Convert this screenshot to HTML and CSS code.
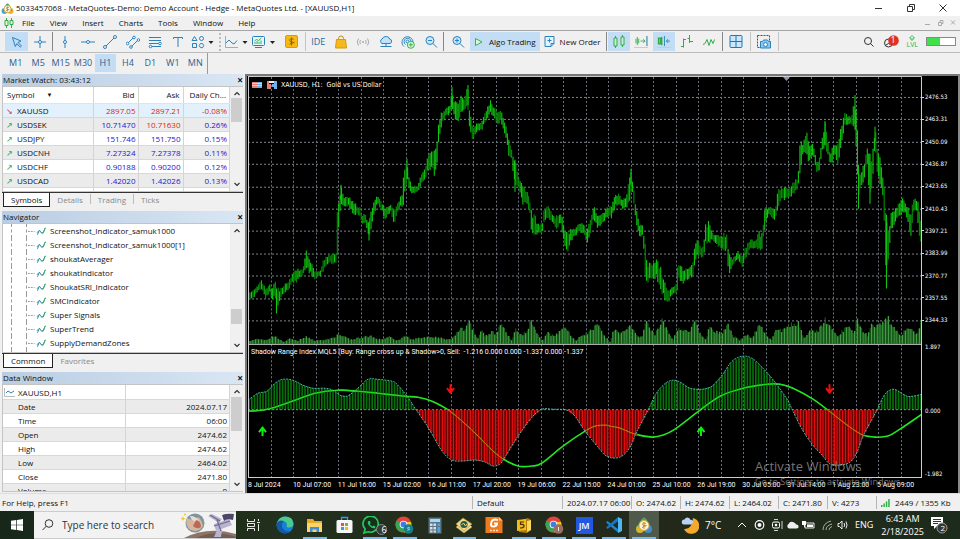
FILE: index.html
```html
<!DOCTYPE html>
<html lang="en">
<head>
<meta charset="utf-8">
<title>5033457068 - MetaQuotes-Demo</title>
<link rel="stylesheet" href="styles.css">
</head>
<body>
<header class="titlebar">
  <svg class="app-logo" width="13" height="13" viewBox="0 0 13 13"><circle cx="3.5" cy="9" r="3" fill="#4aa5dc"/><circle cx="9.5" cy="9" r="3" fill="#e9b52a"/><path d="M4 4Q6.500-1 9 4L11 9H2z" fill="#3f9f52"/><circle cx="6.500" cy="7" r="3.600" fill="#fff" stroke="#d8a93a"/><path d="M8 5.500Q5 4.500 5.300 6.300T7.700 7.500T5 8.600M6.500 4.500v5" fill="none" stroke="#b8862a" stroke-width=".8"/></svg>
  <h1>5033457068 - MetaQuotes-Demo: Demo Account - Hedge - MetaQuotes Ltd. - [XAUUSD,H1]</h1>
  <div class="window-buttons">
    <button aria-label="Minimize"><svg width="10" height="10" viewBox="0 0 10 10"><path d="M1 5.500h7" class="ink"/></svg></button>
    <button aria-label="Restore"><svg width="10" height="10" viewBox="0 0 10 10"><path d="M1.500 3.500h5v5h-5zM3.500 3.500v-2h5v5h-2" class="ink"/></svg></button>
    <button aria-label="Close"><svg width="10" height="10" viewBox="0 0 10 10"><path d="M1.500 1.500l7 7M8.500 1.500l-7 7" class="ink"/></svg></button>
  </div>
</header>

<nav class="menubar">
  <svg width="10" height="10" viewBox="0 0 10 10"><path d="M2.500 0v10M7.500 0v10" stroke="#2fae45"/><path d="M1 2.500h3v5H1zM6 2.500h3v4H6z" fill="#efefef" stroke="#2fae45"/></svg>
  <button>File</button><button>View</button><button>Insert</button><button>Charts</button><button>Tools</button><button>Window</button><button>Help</button>
  <div class="child-buttons"><svg width="36" height="8" viewBox="0 0 36 8"><path d="M1 5.500h5" stroke="#aaa"/><path d="M14.500 3.500h3v3h-3zM16 3V1.500h3v3h-1.500M27 1.500l4 4M31 1.500l-4 4" fill="none" stroke="#aaa"/></svg></div>
</nav>

<section class="toolbar">
  <div class="group g2">
    <button class="on" aria-label="Cursor"><svg width="12" height="12" viewBox="0 0 12 12"><path d="M1.500 1.500l8.500 3.500-3 1.500 3.500 3.500-1.200 1.200-3.500-3.500-1.500 2.800z" class="b"/></svg></button>
    <button aria-label="Crosshair"><svg width="12" height="12" viewBox="0 0 12 12"><path d="M6 0v12M0 6h12" class="b"/><circle cx="6" cy="6" r="1.500" class="w"/></svg></button>
  </div>
  <i class="sep"></i>
  <div class="group g6">
    <button aria-label="Vertical line"><svg width="12" height="12" viewBox="0 0 12 12"><path d="M6 0v12" class="b"/><circle cx="6" cy="6" r="1.500" class="w"/></svg></button>
    <button aria-label="Horizontal line"><svg width="14" height="12" viewBox="0 0 14 12"><path d="M0 6h14" class="b"/><circle cx="7" cy="6" r="1.500" class="w"/></svg></button>
    <button aria-label="Trendline"><svg width="14" height="14" viewBox="0 0 14 14"><path d="M2 12L12 2" class="b"/><circle cx="2" cy="12" r="1.500" class="w"/><circle cx="12" cy="2" r="1.500" class="w"/></svg></button>
    <button aria-label="Channel"><svg width="14" height="14" viewBox="0 0 14 14"><path d="M1.500 8.500l6-6M5 12l7-7" class="b"/><circle cx="1.500" cy="8.500" r="1.300" class="w"/><circle cx="8" cy="2.500" r="1.300" class="w"/><circle cx="5" cy="12" r="1.300" class="w"/><circle cx="12.500" cy="5" r="1.300" class="w"/></svg></button>
    <button aria-label="Fibonacci"><svg width="14" height="14" viewBox="0 0 14 14"><path d="M1 2.500h12M1 5.500h12M1 8.500h12M1 11.500h12" class="b"/><circle cx="12" cy="8.500" r="1.300" class="w"/><circle cx="2.500" cy="11.500" r="1.300" class="w"/></svg></button>
    <button aria-label="Text"><svg width="12" height="12" viewBox="0 0 12 12"><path d="M1.500 3V1.500h9V3M6 1.500V11" class="b"/></svg></button>
  </div>
  <button class="drop" aria-label="Objects"><svg width="24" height="14" viewBox="0 0 24 14"><path d="M3.500 1.500L6 5.500H1zM1.500 8.500h4v4h-4z" class="b"/><circle cx="10.500" cy="3.500" r="2" class="b"/><path d="M12.800 10.600l-1.200 2H9.400l-1.200-2 1.200-2h2.200z" class="b"/><path d="M17.500 6h5L20 9z" fill="#222"/></svg></button>
  <i class="grip"></i>
  <button class="drop" aria-label="Line chart"><svg width="26" height="14" viewBox="0 0 26 14"><path d="M1.500 1v11.500H14" fill="none" stroke="#aaa"/><path d="M2 8l3-3 3 3 2 1 3-3.500" class="b"/><path d="M18.500 6h5L21 9z" fill="#222"/></svg></button>
  <button class="drop" aria-label="Indicators"><svg width="28" height="14" viewBox="0 0 28 14"><rect x="1.500" y="1.500" width="12" height="9" rx="1" fill="#e7f6fb" stroke="#2a82bd"/><path d="M4 9V7M6 9V6M8 9V7M10 9V5.500" stroke="#35b24c"/><path d="M3.500 6l2-1.500 2 1 3-2.500" fill="none" stroke="#35b24c"/><path d="M4 12.500h7" stroke="#2a82bd"/><path d="M19 6h5l-2.500 3z" fill="#222"/></svg></button>
  <button class="icon" aria-label="Trade"><svg width="13" height="13" viewBox="0 0 13 13"><rect x=".5" y=".5" width="12" height="12" rx="1.500" fill="#f7b910" stroke="#d99c06"/><path d="M8.500 4.300Q4.500 3 4.700 5.200T8.200 7.300T4.500 9M6.500 2.500v8" fill="none" stroke="#8f6605"/></svg></button>
  <i class="sep light"></i>
  <div class="group g6">
    <button class="txt">IDE</button>
    <button aria-label="Market"><svg width="12" height="14" viewBox="0 0 12 14"><path d="M3.500 5V3.500a2.500 2.500 0 015 0V5" fill="none" stroke="#c58d10"/><path d="M1.500 4.500h9l1 8.500H.5z" fill="#f6b81b" stroke="#d89a0c"/></svg></button>
    <button aria-label="Signals"><svg width="14" height="10" viewBox="0 0 14 10"><path d="M2.500 1.500Q0 5 2.500 8.500M4.500 3Q3 5 4.500 7M11.500 1.500Q14 5 11.500 8.500M9.500 3Q11 5 9.500 7" fill="none" stroke="#aaa"/><circle cx="7" cy="5" r="1" fill="#aaa"/></svg></button>
    <button aria-label="Cloud"><svg width="14" height="13" viewBox="0 0 14 13"><path d="M3 8.500A2.500 2.500 0 013 4Q4.500 1 7.500 1.500T10.500 4A2.300 2.300 0 0111 8.500z" fill="#bfe3fa" stroke="#2a82bd"/><path d="M7 8.500V11M1.500 11.500h11" class="b"/></svg></button>
    <button aria-label="VPS"><svg width="14" height="14" viewBox="0 0 14 14"><path d="M3 11.500A5.500 5.500 0 1112 7M4.500 9.500A3.500 3.500 0 1110 6" class="b"/><circle cx="6.500" cy="6.500" r="1.500" class="b"/><circle cx="9.800" cy="9.800" r="3.500" fill="#dff7df" stroke="#35b24c"/><path d="M9.800 7.800v4M7.800 9.800h4" stroke="#35b24c"/></svg></button>
    <button aria-label="Zoom out"><svg width="14" height="14" viewBox="0 0 14 14"><circle cx="6" cy="5.500" r="4" fill="#c9e6fa" stroke="#2a82bd"/><path d="M4 5.500h4M9 8.500l4 4" class="b"/></svg></button>
  </div>
  <i class="sep"></i>
  <button class="icon" aria-label="Zoom in"><svg width="14" height="14" viewBox="0 0 14 14"><circle cx="6" cy="5.500" r="4" fill="#c9e6fa" stroke="#2a82bd"/><path d="M4 5.500h4M6 3.500v4M9 8.500l4 4" class="b"/></svg></button>
  <button class="wide on"><svg width="10" height="10" viewBox="0 0 10 10"><path d="M1.500 1.500L8 5 1.500 8.500z" fill="#dff5e3" stroke="#35b24c"/></svg>Algo Trading</button>
  <button class="wide"><svg width="11" height="13" viewBox="0 0 11 13"><path d="M1 1.500h9v7l-3 3H1z" fill="#e3f2fc" stroke="#2a82bd"/><path d="M5.500 3.500v4M3.500 5.500h4M7 11.500v-3h3" class="b"/></svg>New Order</button>
  <i class="sep"></i>
  <div class="group g5">
    <button class="on" aria-label="Candles"><svg width="14" height="14" viewBox="0 0 14 14"><path d="M3.500 1v12M10.500 0v12" class="g"/><path d="M2 3h3v8H2zM9 2h3v8H9z" fill="#cdeee0" stroke="#2fae45"/></svg></button>
    <button class="under" aria-label="Scroll"><svg width="14" height="12" viewBox="0 0 14 12"><path d="M1.500 3v5M4.500 3v5M3 1v9M6.500 5.500h5M9.500 3.500l2 2-2 2" class="g"/><path d="M13.500 0v11" stroke="#1769a5"/></svg></button>
    <button class="on under" aria-label="Shift"><svg width="14" height="12" viewBox="0 0 14 12"><path d="M1 2.500h2v6H1zM4.500 1v9" class="g" stroke-width="1.500"/><path d="M7.500 0v11M13.500 5.500H9.500M11.500 3.500l-2 2 2 2" class="b"/></svg></button>
    <button aria-label="Bars"><svg width="14" height="13" viewBox="0 0 14 13"><path d="M3.500 3.500v9M1 11.500h2.500M3.500 4.500H6M9.500 0v8M7.500 3.500h2M9.500 6.500H13" class="g"/></svg></button>
    <button aria-label="Line"><svg width="14" height="10" viewBox="0 0 14 10"><path d="M1 7.500l2-1 2-4 2 6 2-6 2 4 1.500-4" class="g"/></svg></button>
  </div>
  <i class="sep"></i>
  <button class="icon" aria-label="Tile"><svg width="14" height="13" viewBox="0 0 14 13"><rect x="1" y=".5" width="12" height="12" rx="1" fill="#c9e6fa" stroke="#1f78b6"/><path d="M7 .5v12M1 6.500h12" stroke="#1f78b6"/></svg></button>
  <i class="sep light"></i>
  <button class="icon" aria-label="Screenshot"><svg width="16" height="16" viewBox="0 0 16 16"><path d="M1.500 1.500h12v5M1.500 1.500v12h3" fill="none" stroke="#1d5c90" stroke-dasharray="2 1"/><path d="M4.500 7.500h2l1-1.500h4l1 1.500h2v6.500h-10z" fill="#8cc7f1" stroke="#2a82bd"/><circle cx="9.500" cy="10.500" r="2" fill="#eaf6fd" stroke="#2a82bd"/></svg></button>
  <i class="sep light"></i>
  <div class="tool-right">
    <button aria-label="Search"><svg width="12" height="12" viewBox="0 0 12 12"><circle cx="5" cy="5" r="3.500" class="ink"/><path d="M7.500 7.500l3 3" class="ink"/></svg></button>
    <button class="bell" aria-label="Alerts"><svg width="16" height="14" viewBox="0 0 16 14"><circle cx="5.500" cy="8" r="4" class="ink"/><path d="M3 10q2.500-3 5 0" class="ink"/><circle cx="10.500" cy="5.500" r="5.300" fill="#dc3420"/></svg><span>1</span></button>
    <div class="level"><svg width="8" height="6" viewBox="0 0 8 6"><path d="M4 0.500L1.500 3H3v2h2V3h1.500z" fill="#e0f5e2" stroke="#2fae45" stroke-width=".8"/></svg><span>LVL</span></div>
    <div class="meter"><i></i></div>
  </div>
</section>

<section class="timeframes">
  <div class="frames"><button>M1</button><button>M5</button><button>M15</button><button>M30</button><button class="on">H1</button><button>H4</button><button>D1</button><button>W1</button><button>MN</button></div>
</section>

<main>
  <aside>
    <section class="panel">
      <header><h2>Market Watch: 03:43:12</h2><button aria-label="Close">×</button></header>
      <div class="body">
        <div class="clip">
        <table class="quotes">
          <thead><tr><th>Symbol<b>▼</b></th><th>Bid</th><th>Ask</th><th>Daily Ch...</th></tr></thead>
          <tbody>
            <tr class="sel down"><td><i>↘</i>XAUUSD</td><td class="r">2897.05</td><td class="r">2897.21</td><td class="r">-0.08%</td></tr>
            <tr><td><i>↗</i>USDSEK</td><td>10.71470</td><td class="r">10.71630</td><td>0.26%</td></tr>
            <tr><td><i>↗</i>USDJPY</td><td>151.746</td><td>151.750</td><td>0.15%</td></tr>
            <tr><td><i>↗</i>USDCNH</td><td>7.27324</td><td>7.27378</td><td>0.11%</td></tr>
            <tr><td><i>↗</i>USDCHF</td><td>0.90188</td><td>0.90200</td><td>0.12%</td></tr>
            <tr><td><i>↗</i>USDCAD</td><td>1.42020</td><td>1.42026</td><td>0.13%</td></tr>
            <tr class="last"><td><i></i>US500</td><td>2806.7</td><td>2807.4</td><td class="r">-0.00%</td></tr>
          </tbody>
        </table>
        </div>
        <div class="scroll s1"><svg width="8" height="5" viewBox="0 0 8 5"><path d="M1.500 4L4 1.500 6.500 4"/></svg><i></i><svg width="8" height="5" viewBox="0 0 8 5"><path d="M1.500 1L4 3.500 6.500 1"/></svg></div>
      </div>
      <div class="tabs"><button class="cur">Symbols</button><button>Details</button><button>Trading</button><button>Ticks</button></div>
    </section>

    <section class="panel">
      <header><h2>Navigator</h2><button aria-label="Close">×</button></header>
      <div class="body">
        <ul class="tree clip" id="tree">
          <li>Screenshot_Indicator_samuk1000</li><li>Screenshot_Indicator_samuk1000[1]</li><li>shoukatAverager</li><li>shoukatIndicator</li><li>ShoukatSRI_Indicator</li><li>SMCIndicator</li><li>Super Signals</li><li>SuperTrend</li><li>SupplyDemandZones</li><li>TTM_InSid</li>
        </ul>
        <div class="scroll s2"><svg width="8" height="5" viewBox="0 0 8 5"><path d="M1.500 4L4 1.500 6.500 4"/></svg><i></i><svg width="8" height="5" viewBox="0 0 8 5"><path d="M1.500 1L4 3.500 6.500 1"/></svg></div>
      </div>
      <div class="tabs"><button class="cur">Common</button><button>Favorites</button></div>
    </section>

    <section class="panel flush">
      <header><h2>Data Window</h2><button aria-label="Close">×</button></header>
      <div class="body">
        <div class="clip">
        <table class="data">
          <tr><td><svg width="11" height="9" viewBox="0 0 11 9"><path d="M.5 0v8.500H11" fill="none" stroke="#bbb"/><path d="M2 5l2-2 3 2 3-2" class="b"/></svg>XAUUSD,H1</td><td></td></tr>
          <tr><td>Date</td><td>2024.07.17</td></tr>
          <tr><td>Time</td><td>06:00</td></tr>
          <tr><td>Open</td><td>2474.62</td></tr>
          <tr><td>High</td><td>2474.62</td></tr>
          <tr><td>Low</td><td>2464.02</td></tr>
          <tr><td>Close</td><td>2471.80</td></tr>
          <tr><td>Volume</td><td>0</td></tr>
        </table>
        </div>
        <div class="scroll s3"><svg width="8" height="5" viewBox="0 0 8 5"><path d="M1.500 4L4 1.500 6.500 4"/></svg><i></i><svg width="8" height="5" viewBox="0 0 8 5"><path d="M1.500 1L4 3.500 6.500 1"/></svg></div>
      </div>
    </section>
  </aside>

  <section class="chart">
    <div class="plot">
      <svg id="plot" viewBox="248 76 674 403" preserveAspectRatio="none"></svg>
      <div class="chart-title"><svg width="25" height="8" viewBox="0 0 25 8"><path d="M0 1h5v6H0z" fill="#e67f78"/><path d="M5 1h5v6H5z" fill="#6fb2e8"/><path d="M0 2.500h10M0 4.500h10" stroke="#eee" stroke-width=".7"/><path d="M15 0h2v3h2v5h-4z" fill="#e67f78"/><path d="M20 3h2V0h3v8h-3V6h-2z" fill="#6fb2e8"/><path d="M17 0h5v2h-5z" fill="#eee"/></svg>XAUUSD, H1:&nbsp; Gold vs US Dollar</div>
      <div class="osc-title">Shadow Range Index MQL5 (Buy: Range cross up &amp; Shadow&gt;0, Sell:&nbsp; -1.216 0.000 0.000 -1.337 0.000 -1.337</div>
    </div>
    <div class="axis">
      <div class="prices"><span>2476.53</span><span>2463.31</span><span>2450.09</span><span>2436.87</span><span>2423.65</span><span>2410.43</span><span>2397.21</span><span>2383.99</span><span>2370.77</span><span>2357.55</span><span>2344.33</span></div>
      <div class="levels"><span>1.897</span><span>0.000</span><span>-1.982</span></div>
    </div>
    <div class="times"><span>8 Jul 2024</span><span>10 Jul 07:00</span><span>11 Jul 16:00</span><span>15 Jul 02:00</span><span>16 Jul 11:00</span><span>17 Jul 20:00</span><span>19 Jul 06:00</span><span>22 Jul 15:00</span><span>24 Jul 01:00</span><span>25 Jul 10:00</span><span>26 Jul 19:00</span><span>30 Jul 05:00</span><span>31 Jul 14:00</span><span>1 Aug 23:00</span><span>5 Aug 09:00</span></div>
    <div class="watermark"><strong>Activate Windows</strong><span>Go to Settings to activate Windows.</span></div>
  </section>
</main>

<div class="status">
  <span class="help">For Help, press F1</span>
  <span class="c90">Default</span><span class="c69">2024.07.17 06:00</span><span>O: 2474.62</span><span>H: 2474.62</span><span>L: 2464.02</span><span>C: 2471.80</span><span>V: 4273</span>
  <span class="net"><svg width="9" height="8" viewBox="0 0 9 8"><path d="M0 6h1.500v2H0zM2.400 4.500h1.500V8H2.400zM4.800 2.500h1.500V8H4.800zM7.200 0h1.500v8H7.200z" fill="#2fae45"/></svg>2449 / 1355 Kb</span>
</div>

<footer class="taskbar">
  <button class="start" aria-label="Start"><svg width="12" height="12" viewBox="0 0 12 12"><path d="M0 1.700L5.300 1v4.700H0zM6 .9L12 0v5.700H6zM0 6.300h5.300V11L0 10.300zM6 6.300h6V12l-6-.9z" fill="#fff"/></svg></button>
  <label class="search"><svg width="12" height="12" viewBox="0 0 12 12"><circle cx="7" cy="4.500" r="3.800" class="ink"/><path d="M4.300 7.200L.6 11" class="ink"/></svg><input type="text" placeholder="Type here to search" aria-label="Search">
    <svg class="doodle" width="56" height="26" viewBox="0 0 56 26"><path d="M4 26Q28 14 56 22V26z" fill="#8d7466"/><path d="M16 26Q34 17 56 25V26z" fill="#5d4b49" opacity=".55"/><circle cx="15" cy="11" r="9.500" fill="#7b96a0"/><path d="M7 6q5 3 9 0t7 8q-5 8-14 3-4-5-2-11z" fill="#d6b69c"/><path d="M10 4q6 0 9 5-3 3-5 0-3-1-4-5z" fill="#e9ddd2"/><path d="M16 8q5 1 5 7-4 3-8-1z" fill="#b8695a"/><path d="M3 4l.7 2 2 .7-2 .7L3 9l-.7-1.600-2-.7 2-.7z" fill="#f2c52c"/><circle cx="5" cy="2.500" r="1" fill="#f2c52c"/><path d="M28 4l4-2 10 5-3 4zM34 12l15-5 3 6-16 6zM37 18l-3 7h7l1-7z" fill="#b9b3cf"/><path d="M37 8l4 11M34 14l16-5M30 3l10 6" stroke="#6d6790" stroke-width="1.200"/><path d="M42 3q5-2 12-1l-1 6q-6-2-9 1z" fill="#4b4866"/></svg>
  </label>
  <button class="view" aria-label="Task view"><svg width="13" height="12" viewBox="0 0 13 12"><path d="M.5 0v2.500h7V0M.5 12V9.500h7V12M.5 4.500h7v3h-7zM11.500 0v2M11.500 5v7M10 3.500h3" fill="none" stroke="#fff" stroke-width=".9"/></svg></button>
  <div class="apps">
    <button aria-label="Edge"><svg width="18" height="18" viewBox="0 0 18 18"><circle cx="9" cy="9" r="8.500" fill="#1680d4"/><path d="M1 7Q3 .5 9 .5q8 0 8.500 7 0 4-5 4-3-.3-1.500-2Q11 5 6 5 2 5 1 8z" fill="#4cc98e"/><path d="M1 7Q4 3 8 5.500 5 7 6 11q2 5 8 4-3 3-7 2-6-2-6.500-8z" fill="#1458a8"/></svg></button>
    <button class="run" aria-label="Explorer"><svg width="17" height="15" viewBox="0 0 17 15"><path d="M1 1h6l1.500 2H16v11H1z" fill="#e6ab2b"/><path d="M1 5h15v9H1z" fill="#fbd568"/><path d="M4 9h9v5h-2.500v-2.500h-4V14H4z" fill="#3f8fd6"/></svg></button>
    <button aria-label="Store"><svg width="17" height="18" viewBox="0 0 17 18"><path d="M5.500 5V1.500h6V5" fill="none" stroke="#2aa0e6" stroke-width="1.300"/><rect x=".5" y="4" width="16" height="13" rx="1.500" fill="#f7f7f7"/><path d="M5 7h3v3H5z" fill="#ef5133"/><path d="M9 7h3v3H9z" fill="#7cb928"/><path d="M5 11h3v3H5z" fill="#26a1ea"/><path d="M9 11h3v3H9z" fill="#fbb917"/></svg></button>
    <button class="run" aria-label="WhatsApp"><svg width="25" height="19" viewBox="0 0 25 19"><path d="M2 17l1.200-4A7.600 7.600 0 1116 9.500 7.600 7.600 0 016 15.800z" fill="#15301c" stroke="#2cc65f" stroke-width="1.700"/><path d="M6.500 5q-2 2 1 5t5.500 2l.5-1.500-2-1-1 1Q8.500 9.500 7.700 8l1-1-.8-2z" fill="#2cc65f"/><circle cx="19.500" cy="13.500" r="5" fill="#333c36" stroke="#888"/></svg><span class="badge">6</span></button>
    <button class="run" aria-label="Chrome"><svg width="19" height="18" viewBox="0 0 19 18"><circle cx="8.500" cy="8.500" r="8" fill="#e2443a"/><path d="M1.500 4.500A8 8 0 007.500 16.400L11 10z" fill="#35a654"/><path d="M16 6H9l2.500 5-3 5.500A8 8 0 0016 6z" fill="#fbc117"/><circle cx="8.500" cy="8.500" r="3.800" fill="#fff"/><circle cx="8.500" cy="8.500" r="2.900" fill="#3b7ee8"/><circle cx="13.500" cy="13" r="4.800" fill="#15808c"/><path d="M14.800 11.500q-2.500-.8-2.300.6t2 1-2.200 1.200" fill="none" stroke="#cde" stroke-width=".7"/></svg></button>
    <button aria-label="Calculator"><svg width="14" height="17" viewBox="0 0 14 17"><path d="M.5.5h13v16H.5z" fill="#5d7488"/><path d="M2 2h10v3H2z" fill="#9bdcf8"/><path d="M2 6.500h2.500V9H2zM5.500 6.500H8V9H5.500zM2 10h2.500v2.500H2zM5.500 10H8v2.500H5.500zM2 13.500h2.500v2H2zM5.500 13.500H8v2H5.500z" fill="#d6dee5"/><path d="M9.500 6.500H12V9H9.500zM9.500 10H12v5.500H9.500z" fill="#4ba6e6"/></svg></button>
    <button class="run" aria-label="MetaEditor"><svg width="18" height="18" viewBox="0 0 18 18"><path d="M1 11L10 4l7 7-8 6z" fill="#f3e7b1" stroke="#a8842c" stroke-width=".7"/><path d="M1 8L8 2l9 6-8 7z" fill="#f0dc8a" stroke="#a8842c" stroke-width=".7"/><circle cx="9" cy="8.500" r="3.600" fill="#28594e"/><path d="M6.500 9l2-2 2 3 1.500-2" fill="none" stroke="#e9d27a"/></svg></button>
    <button aria-label="Foxit"><svg width="18" height="18" viewBox="0 0 18 18"><path d="M.5 1H14l3.500 3.500V17H.5z" fill="#ee7b1f"/><path d="M14 1v3.500h3.500z" fill="#ffc790"/><path d="M13 4Q6 2 6 8.500 6 10.500 8 10.500q4 0 4-3H9" fill="none" stroke="#fff" stroke-width="2"/><path d="M5 14.500h8" stroke="#ffe1c4" stroke-width="1.500" stroke-dasharray="2 1"/></svg></button>
    <button class="run" aria-label="MetaTrader"><svg width="16" height="17" viewBox="0 0 16 17"><path d="M3 4l9-3 3 2v10l-4 3-8-1z" fill="#b57d08"/><path d="M1 3l9-1v11l-9 1z" fill="#f2bd18"/><path d="M11 4l4-1v10l-4 2z" fill="#ffd95d"/><path d="M8 5H4.500v2.500Q8 7 8 9t-4 2" fill="none" stroke="#473204" stroke-width="1.200"/></svg></button>
    <button class="run" aria-label="Chrome profile"><svg width="19" height="18" viewBox="0 0 19 18"><circle cx="8.500" cy="8.500" r="8" fill="#e2443a"/><path d="M1.500 4.500A8 8 0 007.500 16.400L11 10z" fill="#35a654"/><path d="M16 6H9l2.500 5-3 5.500A8 8 0 0016 6z" fill="#fbc117"/><circle cx="8.500" cy="8.500" r="3.800" fill="#fff"/><circle cx="8.500" cy="8.500" r="2.900" fill="#3b7ee8"/><circle cx="13.500" cy="13" r="4.800" fill="#9a6e60"/><path d="M13.500 11v4" stroke="#fff" stroke-width=".8"/></svg></button>
    <button class="run jm"><span>JM</span></button>
    <button class="run" aria-label="VS Code"><svg width="18" height="18" viewBox="0 0 18 18"><path d="M1 6.500L2.500 5 13.500 13.500V17z" fill="#1e86cf"/><path d="M13 1L1 11.500 2.500 13 13.500 5z" fill="#1677bd"/><path d="M13 1l4 2v12l-4 2z" fill="#4bb8f5"/></svg></button>
    <button class="run active" aria-label="MetaTrader 5"><svg width="18" height="18" viewBox="0 0 18 18"><circle cx="5" cy="13" r="4" fill="#d6b62c"/><circle cx="13" cy="13" r="4" fill="#3b8fd0"/><path d="M5 6Q9-3 13 6l2 5H3z" fill="#4aa660"/><circle cx="9" cy="9.500" r="5" fill="#fbf3d8" stroke="#e0aa3a"/><path d="M11 7.500Q7.500 6 7.500 8t3 1.500T7 11.500M9 6v7" fill="none" stroke="#bf822a" stroke-width=".9"/></svg></button>
  </div>
  <div class="tray">
    <svg width="18" height="18" viewBox="0 0 18 18"><path d="M12 2a8 8 0 11-9 11q8 1 9-11z" fill="#f5a92c"/><path d="M3 8.500A2.500 2.500 0 013.500 3.500Q5 .5 8 2q1 .5 1.300 1.700Q12.500 4 12 6.500 11.500 8.500 10 8.500z" fill="#b9d3f2"/></svg>
    <span class="temp">7°C</span>
    <svg class="marks" width="114" height="14" viewBox="0 0 114 14"><g fill="none" stroke="#fff"><path d="M2 9l4-4 4 4"/><circle cx="23.500" cy="7" r="4.300" stroke-width="1.200"/><rect x="36.500" y="4" width="7" height="6" rx="1.500"/><path d="M38 1.500h4M38 12.500h4M46 3v8" stroke-width=".8"/><path d="M69 5h9v5h-9z" stroke-width=".9"/><path d="M87 12Q87 5 95 3M90 12Q90 7.500 96 6M93 12q0-2.500 3-3.500" stroke="#aaa"/><path d="M102 5.500h1.500L106 3v8l-2.500-2.500H102z" stroke-width=".9"/><path d="M108 5q1.500 2 0 4M110 3.500q2 3.500 0 7" stroke-width=".9"/></g><circle cx="23.500" cy="7" r="2" fill="#fff"/><circle cx="40" cy="7" r="1.300" fill="#fff"/><path d="M53 10.500A2.500 2.500 0 0152.500 6Q54 3 57 4t3 2.500A2 2 0 0161 10.500z" fill="#eee"/><path d="M71 6.500h6v2.500h-6zM66 3h4v4h-1v2h-1V7h-2z" fill="#fff"/></svg>
    <span class="lang">ENG</span>
    <div class="clock"><span>6:43 AM</span><span>2/18/2025</span></div>
    <button class="notes" aria-label="Notifications"><svg width="18" height="18" viewBox="0 0 18 18"><path d="M1 1h12v9H7l-3 3v-3H1z" fill="#fff"/><path d="M3 3.500h8M3 5.500h8M3 7.500h5" stroke="#333"/><circle cx="12" cy="12" r="5" fill="#2e3a31" stroke="#9a9a9a"/></svg><span class="badge">2</span></button>
  </div>
</footer>
<script src="chart.js"></script>
</body>
</html>
```
FILE: styles.css
```css
*{box-sizing:border-box}
html,body{margin:0;height:100%}
body{display:flex;flex-direction:column;min-height:100vh;overflow:hidden;background:#f0f0f0;color:#111;font:8px/12px "Open Sans","Noto Sans",sans-serif}
h1,h2{margin:0;font:inherit}
button{border:0;padding:0;background:none;font:inherit;color:inherit}
svg{display:block;flex:none}
.ink{fill:none;stroke:#333}
.b{fill:none;stroke:#2a82bd}
.w{fill:#fff;stroke:#2a82bd}
.g{fill:none;stroke:#2fae45}

.titlebar{flex:none;height:16px;display:flex;align-items:center;gap:2px;padding-left:1px;background:#fff}
.window-buttons{margin-left:auto;display:flex;gap:22px;padding-right:12px}
.menubar{flex:none;height:15px;display:flex;align-items:center;padding-left:4px;border-bottom:1px solid #a5a5a5}
.menubar button{padding:0 7px 0 8px}
.child-buttons{margin-left:auto}

.toolbar{flex:none;height:22px;display:flex;align-items:center;padding-left:5px;border-bottom:1px solid #bbb}
.toolbar button{display:flex;align-items:center;justify-content:center;height:19px}
.toolbar .group{display:grid;grid-auto-flow:column;grid-auto-columns:1fr}
.g2{width:46px}.g6{width:135px}.g5{width:113px}
.toolbar .on,.timeframes .on{background:#c3ddf4}
.toolbar .icon{width:25px}
.toolbar .drop{width:28px}
.toolbar .txt{font-size:9px;color:#1f6aa5}
.toolbar .wide{gap:5px;padding:0 4px}
.under svg{border-bottom:1px solid #ccc}
.sep{flex:none;width:1px;height:19px;margin:0 1px;background:#888}
.sep.light{background:#c4c4c4}
.grip{flex:none;width:2px;height:18px;margin:0 2px;border-left:2px dotted #bbb}
.tool-right{margin-left:auto;display:flex;align-items:center;gap:8px;padding-right:4px}
.bell{position:relative}
.bell span{position:absolute;left:8px;top:2px;color:#fff;font-size:9px}
.level{display:flex;flex-direction:column;align-items:center;color:#2fae45;font-size:7px;line-height:8px}
.meter{width:30px;height:9px;border:1px solid #888;background:#fff}
.meter i{display:block;width:45%;height:100%;background:#3fe04a}

.timeframes{flex:none;height:21px;display:flex;padding-left:5px}
.frames{display:grid;grid-template-columns:repeat(9,1fr);width:203px;border-right:1px solid #999}
.frames button{font-size:9px;color:#2b5f8e;margin:1px 1px 2px 0}

main{flex:1;min-height:0;display:flex;border-bottom:1px solid #ddd}
aside{flex:none;width:245px;display:grid;grid-template-rows:137fr 162fr 121fr;padding:0 2px}
.panel{min-height:0;display:flex;flex-direction:column;padding-bottom:4px}
.flush{padding-bottom:1px}
.panel>header{flex:none;display:flex;justify-content:space-between;align-items:center;height:12px;padding:0 0 0 1px;background:linear-gradient(90deg,#b9cde2,#d9e6f4)}
.panel>header button{font-size:10px;line-height:10px;font-weight:700;color:#111}
.body{flex:1;min-height:0;display:grid;grid-template-columns:1fr 13px;background:#fff;border:1px solid #c4c4c4;border-right:0}
.clip{overflow:hidden;min-height:0}
table{width:100%;border-collapse:collapse;table-layout:fixed}
th,td{height:14px;padding:0 2px 0 0;font-weight:400;text-align:right;border-right:1px solid #d4d4d4;border-bottom:1px solid #d8d8d8;white-space:nowrap;line-height:13px}
th{height:16px;padding-right:3px;border-bottom:1px solid #e3e3e3}
.quotes th:first-child{width:90px;text-align:left;padding-left:4px}
.quotes th:nth-child(2),.quotes th:nth-child(3){width:45px}
.quotes b{margin-left:12px;font-size:6px;vertical-align:1px}
td:first-child{text-align:left}
.quotes td{color:#2015d6}
.quotes td:first-child{color:#111}
.quotes .r{color:#e01a24}
.quotes i{display:inline-block;width:14px;padding-left:3px;font-style:normal;color:#22a045}
.quotes .down i{color:#e0262f}
tr:nth-child(even) td{background:#ebebeb}
.quotes .sel td{background:#e2f1fb}
.quotes .last td:nth-child(2),.quotes .last td:nth-child(3){color:#222}
.data td:first-child{width:122px;padding-left:15px}
.data td svg{display:inline-block;margin:0 3px 0 -14px;vertical-align:-1px}
.scroll{display:flex;flex-direction:column;align-items:center;background:#f0f0f0;padding:4px 0}
.scroll path{fill:none;stroke:#333;stroke-width:1.200}
.scroll i{width:11px;background:#cdcdcd}
.scroll svg:last-child{margin-top:auto}
.s1 i{height:24px;margin-top:2px}
.s2 i{height:15px;margin-top:76px}
.s3 i{height:34px;margin-top:3px}
.tabs{flex:none;display:flex;align-items:flex-start;height:15px;border-top:1px solid #333;color:#888}
.tabs button{height:13px;padding:0 7px;line-height:13px}
.tabs button+button+button{border-left:1px solid #bbb;height:10px;line-height:12px;margin-top:1px}
.tabs .cur{background:#fff;color:#111;border:1px solid #222;border-top:0;height:14px;margin:0 0 0 1px}
.tree{margin:0;padding:0 0 0 8px;list-style:none}
.tree li{display:flex;align-items:center;gap:3px;height:14px;border-left:1px dashed #999;padding-left:14px;white-space:nowrap}
.tree svg{border-left:1px dashed #999}

.chart{position:relative;flex:1;min-width:0;display:grid;grid-template-columns:1fr 36px;grid-template-rows:1fr 15px;background:#000;border:2px solid #777;border-bottom-width:0;border-right:2px solid #8a8a8a;padding-left:1px;color:#fff;font:6px/8px "DejaVu Sans Condensed","Liberation Sans",sans-serif}
.plot{position:relative;min-height:0}
.plot>svg{width:100%;height:100%}
.chart-title{position:absolute;left:4px;top:5px;display:flex;gap:4px;font-size:7px}
.osc-title{position:absolute;left:3px;top:67%;margin-top:3px;font-family:Roboto,sans-serif;font-size:7px;white-space:nowrap}
.axis{display:grid;grid-template-rows:268fr 135fr;min-height:0}
.prices{display:grid;grid-template-rows:repeat(11,1fr);padding:10px 0 12px}
.prices span{display:flex;align-items:center;gap:1px}
.prices span::before{content:"";width:2px;height:1px;background:#ddd}
.levels{display:flex;flex-direction:column;justify-content:space-between;padding-left:3px}
.times{display:grid;grid-template-columns:repeat(15,1fr);font-family:Roboto,sans-serif;font-size:7px;line-height:14px;white-space:nowrap}
.watermark{position:absolute;right:38px;bottom:4px;width:165px;display:flex;flex-direction:column;color:rgba(170,170,170,.7);font-family:"Open Sans",sans-serif;white-space:nowrap}
.watermark strong{font-size:13px;line-height:18px;font-weight:400}
.watermark span{font-size:9px;line-height:14px}

.status{flex:none;height:17px;display:flex;align-items:center;line-height:15px;background:#f0f0f0}
.status span{width:49px;padding-left:4px;border-left:1px solid #b5b5b5;white-space:nowrap;line-height:13px}
.status .help{flex:1;border:0;padding-left:2px}
.status .c90{width:90px}.status .c69{width:69px}
.status .net{width:84px;display:flex;align-items:center;gap:5px}

.taskbar{flex:none;height:28px;display:flex;background:linear-gradient(90deg,#17281a,#22301d 30%,#24291b 60%,#1d2b1c);color:#fff}
.taskbar button{display:flex;align-items:center;justify-content:center;position:relative}
.start{width:34px}
.search{width:202px;display:flex;align-items:center;background:#f2f2f2;padding-left:8px;border:1px solid #ccc;border-width:1px 0}
.search input{flex:1;min-width:0;border:0;background:none;padding:0 0 0 8px;font:10px/14px "Open Sans",sans-serif}
.search input::placeholder{color:#333;opacity:1}
.doodle{margin-left:auto}
.view{width:34px}
.apps{display:grid;grid-template-columns:repeat(13,1fr);width:389px}
.apps .run::after{content:"";position:absolute;left:3px;right:3px;bottom:0;height:2px;background:#76b9ed}
.apps .active{background:#4f5a4c}
.badge{position:absolute;right:3px;bottom:3px;font-size:9px;line-height:12px;color:#fff}
.jm span{width:17px;height:17px;background:#2257e0;font-size:9px;line-height:17px;font-weight:600;text-align:center}
.tray{flex:1;display:flex;align-items:center;padding-left:22px}
.temp{margin-left:6px;width:31px;font-size:10px}
.lang{margin-left:5px;font-size:9px}
.clock{display:flex;flex-direction:column;align-items:center;margin-left:8px;font-size:9px;line-height:13px}
.notes{margin-left:auto;margin-right:12px}
.notes .badge{right:3px;bottom:0;font-size:8px}
```
FILE: chart.js
```js
const NS = 'http://www.w3.org/2000/svg';
const plot = document.getElementById('plot');
function add(tag, attrs) {
  const el = document.createElementNS(NS, tag);
  for (const k in attrs) el.setAttribute(k, attrs[k]);
  plot.appendChild(el);
  return el;
}
let seed = 7;
const rnd = () => (seed = (seed * 16807) % 2147483647) / 2147483647;

/* x, high, low */
const range = [[248,294,302],[255,289,296],[261,280,289],[266,289,299],[270,285,292],[272,290,302],[275,276,295],[276.5,289,314],[280,289,300],[285,285,292],[290,280,289],[292,275,284],[297,270,282],[303,269,275],[306,250,269],[308,255,272],[312,264,277],[315,272,279],[320,272,276],[323,262,272],[328,255,264],[336,254,263],[337,210,260],[339,192,232],[341,185,205],[344,197,209],[348,197,205],[353,200,215],[360,209,215],[362,214,227],[365,214,220],[369,222,241],[373,202,219],[377,195,204],[381,200,209],[385,210,219],[391,204,212],[394,210,225],[398,204,210],[402,192,207],[404,172,205],[407,159,179],[409,175,190],[412,187,193],[418,187,192],[421,174,185],[425,169,180],[428,155,170],[432,152,169],[434,152,177],[437,139,172],[439,115,139],[443,112,120],[447,107,115],[450,104,114],[452,87,110],[454,99,119],[458,105,122],[461,94,115],[464,99,112],[468,85,110],[470,115,134],[473,125,140],[478,124,130],[482,122,130],[485,112,122],[489,105,117],[491,100,112],[494,107,119],[498,114,124],[501,108,122],[504,120,135],[507,130,144],[509,139,159],[512,150,159],[515,159,192],[518,177,185],[523,187,205],[527,190,204],[530,202,215],[532,215,237],[535,214,234],[538,225,235],[543,222,232],[544,207,224],[548,207,219],[552,214,222],[556,217,229],[561,212,225],[563,222,239],[567,235,255],[571,230,242],[575,229,235],[581,222,232],[585,227,235],[587,232,247],[591,214,230],[594,207,219],[597,214,229],[602,215,224],[607,209,217],[612,205,219],[615,195,207],[619,195,205],[623,200,210],[627,195,209],[629,179,205],[631,169,192],[633,184,195],[635,200,215],[637,209,227],[640,225,239],[643,226,235],[645,239,279],[647,264,284],[651,262,279],[653,265,284],[657,257,279],[660,265,290],[664,279,300],[668,290,307],[672,287,295],[676,285,294],[677,264,302],[679,262,279],[684,270,285],[688,269,279],[693,260,277],[695,242,262],[698,240,257],[702,250,257],[704,242,255],[706,222,245],[709,222,247],[712,234,239],[715,234,244],[718,236,247],[722,235,249],[727,232,252],[729,255,279],[733,259,265],[738,252,259],[742,257,267],[746,247,259],[750,240,249],[755,242,249],[759,231,250],[761,240,255],[765,208,229],[769,207,214],[775,210,220],[778,190,209],[781,187,200],[785,187,200],[790,187,199],[793,180,195],[798,179,190],[800,140,175],[803,144,152],[807,128,164],[810,147,160],[813,144,155],[815,152,164],[817,164,175],[820,155,170],[822,135,155],[825,121,152],[828,142,157],[830,152,168],[835,144,154],[838,139,169],[842,125,140],[845,111,125],[848,117,124],[852,115,125],[855,95,132],[857,100,165],[858,162,209],[861,172,189],[864,164,182],[867,147,162],[870,154,204],[873,149,182],[875,127,142],[877,142,172],[879,150,190],[882,169,187],[884,185,214],[886,212,288],[889,232,259],[891,207,235],[893,212,227],[897,205,219],[902,199,217],[903,197,212],[906,205,215],[908,207,225],[911,215,237],[913,200,215],[917,199,210],[919,205,242],[922,229,247]];
/* x, height */
const volume = [[248,2],[257,5],[266,4],[275,8],[283,2],[290,5],[297,3],[307,7],[315,3],[330,5],[339,9],[346,6],[352,4],[358,6],[371,8],[378,4],[390,7],[397,3],[405,8],[412,4],[420,6],[430,7],[440,6],[448,4],[455,8],[461,16],[464,12],[468,24],[472,17],[478,5],[482,14],[485,8],[492,12],[497,10],[501,22],[506,11],[512,3],[516,15],[520,9],[526,11],[532,24],[537,10],[543,3],[548,12],[553,8],[560,12],[565,19],[570,9],[576,3],[582,9],[588,11],[592,14],[598,19],[603,9],[610,2],[614,14],[620,11],[627,13],[630,22],[635,10],[642,6],[646,24],[650,14],[655,10],[662,23],[668,12],[673,4],[678,16],[684,13],[690,12],[695,23],[700,10],[706,4],[710,18],[716,12],[722,10],[728,18],[733,8],[740,3],[746,10],[752,6],[760,20],[766,8],[772,4],[776,14],[784,14],[790,18],[798,22],[804,6],[810,12],[818,13],[825,24],[832,14],[838,7],[845,16],[850,16],[854,8],[857,27],[862,14],[868,8],[872,20],[880,18],[888,26],[894,15],[900,8],[906,14],[912,13],[917,10],[922,25]];
const shadow = [[248,401],[258,394],[267,392],[275,384],[283,380],[293,381],[303,386],[313,389],[325,389],[333,391],[340,396],[347,397],[353,393],[360,387],[368,380],[377,380],[392,382],[398,386],[407,397],[415,409],[428,428],[442,452],[452,461],[463,462],[475,461],[485,463],[493,467],[500,465],[505,458],[518,437],[532,418],[542,410],[552,410],[567,411],[575,417],[585,432],[598,448],[605,456],[613,459],[622,457],[630,448],[637,432],[648,411],[657,393],[667,383],[675,381],[682,384],[690,389],[702,390],[712,387],[722,376],[732,362],[742,357],[752,359],[763,369],[775,383],[787,400],[793,412],[802,430],[812,445],[822,456],[830,465],[840,466],[850,463],[857,453],[863,437],[872,420],[878,409],[883,398],[888,392],[894,390],[900,393],[907,397],[913,397],[922,395]];
const signal = [[248,412],[262,411],[275,408],[295,401],[315,394],[338,391],[358,392],[378,394],[405,397],[418,398],[432,402],[450,412],[473,432],[493,452],[505,461],[518,467],[532,467],[542,464],[563,447],[585,432],[595,427],[605,426],[610,427],[620,429],[635,435],[652,438],[663,436],[675,430],[700,411],[720,397],[743,389],[767,385],[780,385],[793,389],[813,400],[833,415],[850,428],[863,436],[875,438],[888,437],[900,430],[922,415]];

function at(data, x, col) {
  let i = 1;
  while (i < data.length - 1 && data[i][0] < x) i++;
  const a = data[i - 1], b = data[i];
  const t = Math.max(0, Math.min(1, (x - a[0]) / (b[0] - a[0])));
  return a[col] + (b[col] - a[col]) * t;
}
function smooth(p) {
  let d = `M${p[0]}`;
  for (let i = 0; i < p.length - 1; i++) {
    const a = p[i - 1] || p[i], b = p[i], c = p[i + 1], e = p[i + 2] || c;
    d += `C${b[0] + (c[0] - a[0]) / 6} ${b[1] + (c[1] - a[1]) / 6} ${c[0] - (e[0] - b[0]) / 6} ${c[1] - (e[1] - b[1]) / 6} ${c}`;
  }
  return d;
}

/* grid */
let grid = '';
for (let i = 0; i < 11; i++) grid += `M248 ${Math.round(97 + i * 22.4) + .5}H921`;
add('path', { d: grid, stroke: '#7d8590', 'stroke-dasharray': '2 2', fill: 'none' });
grid = '';
for (let i = 1; i < 30; i++) grid += `M${Math.round(248 + i * 22.5) + .5} 77V479`;
add('path', { d: grid, stroke: '#6c737c', 'stroke-dasharray': '2 2', fill: 'none' });
add('path', { d: 'M783 77h7l-3.500 4z', fill: '#8b98a5' });

/* candles and volumes */
let bright = '', dark = '', vol = '', vol2 = '';
for (let i = 0; i < 479; i++) {
  const x = 248.7 + i * 1.406;
  const hi = at(range, x, 1), lo = at(range, x, 2), h = (lo - hi);
  const y1 = hi - 1 + rnd() * h * .3, y2 = lo + 1 - rnd() * h * .3;
  const d = `M${x.toFixed(1)} ${y1.toFixed(1)}V${y2.toFixed(1)}`;
  if (rnd() > .4) bright += d; else dark += d;
  const v = Math.max(1, at(volume, x, 1) * (.85 + rnd() * .3));
  const e = `M${x.toFixed(1)} 344.500v${(-v).toFixed(1)}`;
  if (i % 2) vol += e; else vol2 += e;
}
/* single long wicks */
for (const [x, a, b] of [[276.5,289,314],[341,185,200],[369,222,241],[407,159,179],[452,87,105],[468,85,105],[515,160,192],[631,169,185],[825,121,145],[855,95,130],[870,154,204],[858.5,165,209],[875,127,142],[886.5,215,289]])
  bright += `M${x} ${a}V${b}`;
add('path', { d: dark, stroke: '#078a07', 'stroke-width': 1.1 });
add('path', { d: bright, stroke: '#10c410', 'stroke-width': 1.1 });
add('path', { d: vol2, stroke: '#1b6b1b', 'stroke-width': 1 });
add('path', { d: vol, stroke: '#3fa043', 'stroke-width': 1.4 });

/* oscillator */
const zero = 410.5;
add('path', { d: smooth(signal), fill: 'none', stroke: '#22e622', 'stroke-width': 1.6 });
let up = '', down = '';
for (let x = 249; x < 921; x += 2.8) {
  const y = at(shadow, x, 1);
  const d = `M${x.toFixed(1)} ${zero}V${y.toFixed(1)}`;
  if (y < zero) up += d; else if (y > zero + 1) down += d;
}
const defs = add('defs', {});
defs.innerHTML = `<clipPath id="below"><path d="${smooth(shadow)}V${zero}H248z"/></clipPath><clipPath id="half"><path d="M248 ${zero}H922V479H248z"/></clipPath>`;
add('path', { d: down, stroke: '#e30b0b', 'stroke-width': 1.7 });
add('path', { d: down, stroke: '#6e0606', 'stroke-width': 1.1, transform: 'translate(1.4 0)' });
add('path', { d: up, stroke: '#07700b', 'stroke-width': 1.7 });
const olive = add('g', { 'clip-path': 'url(#half)' });
olive.innerHTML = `<path d="${smooth(signal)}" clip-path="url(#below)" fill="none" stroke="#a98a12" stroke-width="1"/>`;
add('path', { d: smooth(signal.filter(p => p[0] <= 418)), fill: 'none', stroke: '#22d922', 'stroke-width': 1.1 });
add('path', { d: smooth(signal.filter(p => p[0] >= 700 && p[0] <= 793)), fill: 'none', stroke: '#22d922', 'stroke-width': 1.2 });
add('path', { d: smooth(shadow), fill: 'none', stroke: '#58c3bd', 'stroke-width': .9, 'stroke-dasharray': '2 1' });
add('path', { d: `M248 ${zero}H921`, stroke: '#9aa39a', 'stroke-width': .8, 'stroke-dasharray': '2 2' });

/* signal arrows */
for (const [x, y, s] of [[262.5, 432, 1], [701, 432, 1], [450.5, 390, -1], [829.5, 390, -1]])
  add('path', { d: 'M0 5V-3M-3.500 1L0-3.500 3.500 1', transform: `translate(${x} ${y}) scale(1 ${s})`, fill: 'none', stroke: s > 0 ? '#0bf00b' : '#f01010', 'stroke-width': 2 });

/* frame */
add('path', { d: 'M248 76.500H921.500V479M248 345H922M248 478.500H922M248.500 76V479', fill: 'none', stroke: '#cfcfcf' });

/* navigator icons */
for (const li of document.querySelectorAll('#tree li'))
  li.insertAdjacentHTML('afterbegin', '<svg width="21" height="14" viewBox="0 0 21 14"><path d="M1 7.500h7" stroke="#999" stroke-dasharray="2 1"/><path d="M11 11l2-5 2 3h2l2-5" fill="none" stroke="#2a82bd"/><path d="M15 9h2l2-5h1M10.500 9l1.500-2" fill="none" stroke="#35b24c"/></svg>');
```
